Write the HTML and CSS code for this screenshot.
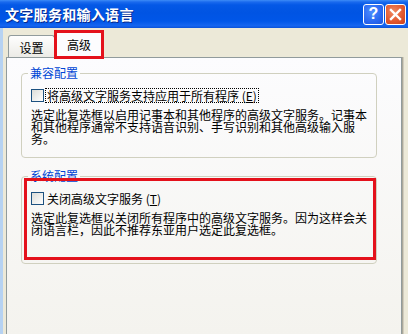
FILE: index.html
```html
<!DOCTYPE html>
<html lang="zh">
<head>
    <meta charset="UTF-8">
    <title>文字服务和输入语言</title>
    <link rel="stylesheet" href="styles.css">
</head>
<body>

<div class="window">
    <div class="titlebar">
        <span class="title">文字服务和输入语言</span>
        <div class="title-buttons">
            <button class="tb-btn help">?</button>
            <button class="tb-btn close">
                <svg width="13" height="13" viewBox="0 0 13 13">
                    <path d="M2 2 L11 11 M11 2 L2 11" stroke="#fff" stroke-width="2.4" stroke-linecap="square"/>
                </svg>
            </button>
        </div>
    </div>

    <div class="client">
        <div class="tabs">
            <div class="tab">设置</div>
            <div class="tab active">高级<span class="mark"></span></div>
        </div>

        <div class="panel">
            <fieldset class="group">
                <legend>兼容配置</legend>
                <div class="check-row">
                    <span class="checkbox"></span>
                    <span class="check-label focused">将高级文字服务支持应用于所有程序 (<u>E</u>)</span>
                </div>
                <p class="desc">选定此复选框以启用记事本和其他程序的高级文字服务。记事本和其他程序通常不支持语音识别、手写识别和其他高级输入服务。</p>
            </fieldset>

            <fieldset class="group second">
                <legend>系统配置</legend>
                <div class="check-row">
                    <span class="checkbox"></span>
                    <span class="check-label">关闭高级文字服务 (<u>T</u>)</span>
                </div>
                <p class="desc">选定此复选框以关闭所有程序中的高级文字服务。因为这样会关闭语言栏，因此不推荐东亚用户选定此复选框。</p>
            </fieldset>

            <div class="mark group-mark"></div>
        </div>
    </div>
</div>

</body>
</html>
```

FILE: styles.css
```css
body {
    margin: 0;
    width: 408px;
    height: 334px;
    overflow: hidden;
    font-family: "Noto Sans CJK SC", "Liberation Sans", sans-serif;
    font-size: 12px;
    color: #000;
}

.window {
    display: flex;
    flex-direction: column;
    height: 334px;
}

.titlebar {
    height: 28px;
    display: flex;
    align-items: center;
    justify-content: space-between;
    padding: 0 2px 0 5px;
    background: linear-gradient(to bottom, #3d8cf7 0, #1a6aee 2px, #0458e6 5px, #0054e3 45%, #0056e8 75%, #1565f0 92%, #0a52d8 100%);
}

.title {
    color: #fff;
    font-weight: bold;
    font-size: 14px;
    letter-spacing: 0.3px;
    text-shadow: 1px 1px 0 #0a2a8a;
}

.title-buttons {
    display: flex;
    gap: 1px;
}

.tb-btn {
    width: 21px;
    height: 21px;
    padding: 0;
    margin: 0;
    border: 1px solid #fff;
    border-radius: 3px;
    display: flex;
    align-items: center;
    justify-content: center;
    color: #fff;
    font-family: "Liberation Sans", sans-serif;
    font-weight: bold;
    font-size: 16px;
}

.help {
    background: radial-gradient(circle at 40% 35%, #4c8cff 0, #2a68f0 60%, #1d55dc 100%);
}

.close {
    background: radial-gradient(circle at 40% 35%, #f08a64 0, #e35a30 55%, #c8401c 100%);
}

.client {
    flex: 1;
    display: flex;
    flex-direction: column;
    background: #ece9d8;
    border-left: 3px solid #b6d2f2;
    padding: 5px 6px 0 3px;
}

.tabs {
    display: flex;
    align-items: flex-end;
    margin-left: 2px;
    height: 24px;
    position: relative;
    z-index: 1;
}

.tab {
    width: 45px;
    height: 20px;
    border: 1px solid #919b9c;
    border-bottom: none;
    border-radius: 3px 3px 0 0;
    background: linear-gradient(to bottom, #fefefe, #ecebe6);
    display: flex;
    align-items: center;
    justify-content: center;
    padding-top: 1px;
    position: relative;
}

.tab.active {
    width: 46px;
    height: 22px;
    margin-bottom: -1px;
    background: #fcfcfe;
    border-top: 2px solid #ffc83c;
    align-items: flex-start;
    padding-top: 3px;
}

.mark {
    position: absolute;
    border: 3px solid #e4111b;
    box-sizing: border-box;
}

.tab .mark {
    left: -2px;
    top: -3px;
    right: -2px;
    bottom: -1px;
}

.panel {
    flex: 1;
    position: relative;
    border: 1px solid #919b9c;
    border-bottom: none;
    background: linear-gradient(to bottom, #fcfcfe, #f4f3ee);
    box-shadow: 1px 0 0 #aca899, 2px 0 0 #d0cdbf;
    padding: 8px 24px 0 14px;
}

.group {
    margin: 0;
    border: 1px solid #d0d0bf;
    border-radius: 4px;
    padding: 0 8px 12px 9px;
}

.group.second {
    margin-top: 11px;
    padding-bottom: 27px;
}

.group legend {
    color: #0046d5;
    line-height: 14px;
    padding: 0 2px;
    margin-left: -3px;
}

.check-row {
    display: flex;
    align-items: center;
    margin-top: 8px;
    height: 15px;
}

.checkbox {
    width: 11px;
    height: 11px;
    border: 1px solid #1c5180;
    background: linear-gradient(135deg, #dcdcd7, #fff);
    margin-right: 1px;
}

.check-label {
    line-height: 13px;
    padding: 0 1px;
    border: 1px dotted transparent;
}

.check-label.focused {
    border-color: #000;
}

.desc {
    margin: 6px 0 0;
    line-height: 12px;
}

.group-mark {
    left: 17px;
    top: 120px;
    width: 352px;
    height: 82px;
}
```
